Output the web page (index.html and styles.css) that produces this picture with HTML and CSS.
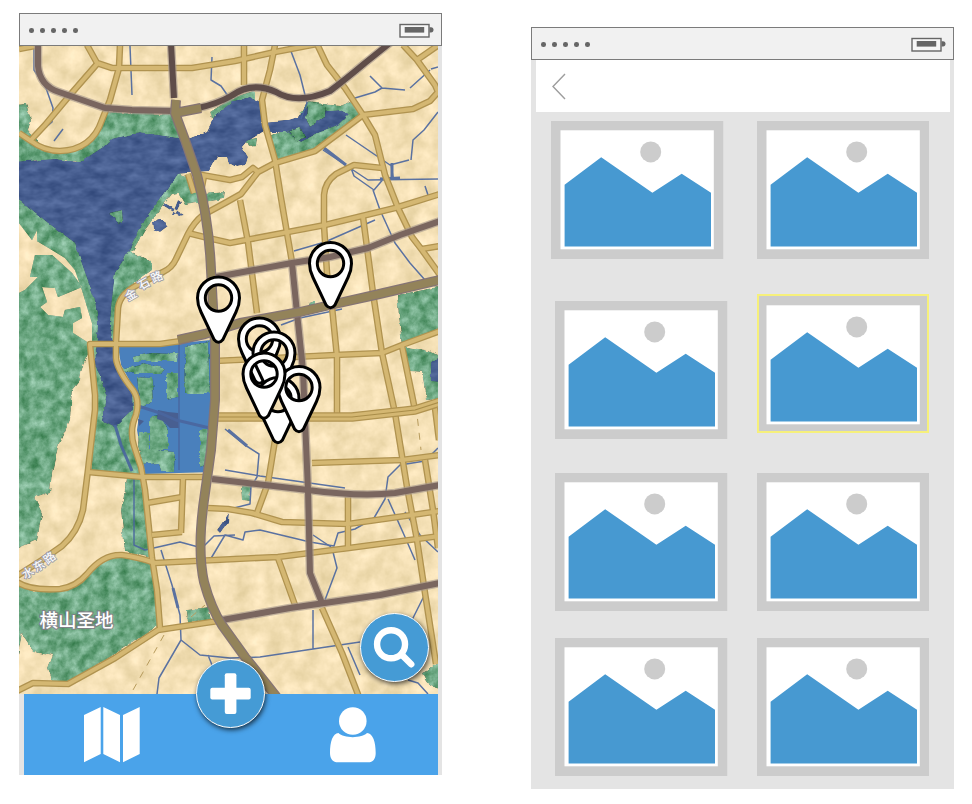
FILE: index.html
```html
<!DOCTYPE html>
<html lang="zh-CN">
<head>
<meta charset="utf-8">
<title>Map and gallery</title>
<link rel="stylesheet" href="styles.css">
</head>
<body>
<svg class="sprites" width="0" height="0" aria-hidden="true">
  <symbol id="picture" viewBox="0 0 172.5 138">
    <rect width="172.5" height="138" fill="#ccc"/>
    <rect x="9.5" y="9.3" width="153.3" height="119" fill="#fff"/>
    <circle cx="99.7" cy="30.9" r="10.5" fill="#ccc"/>
    <path d="M13.6 63.8 50.2 36.2 101.4 71.8 130.7 52.8 160 71.8V125.5H13.6Z" fill="#4799d1"/>
  </symbol>
  <symbol id="battery" viewBox="0 0 36 16">
    <rect x="1" y="1.5" width="29" height="12.5" fill="#f6f6f6" stroke="#666" stroke-width="1.4"/>
    <rect x="5.7" y="4" width="19.5" height="5.6" fill="#666"/>
    <path d="M30.5 4.2h1.5c3.4 0 3.4 5.2 0 5.2h-1.5z" fill="#666"/>
  </symbol>
</svg>
<main class="board">
  <section class="phone phone-map">
    <header class="status"><span class="dots"><i></i><i></i><i></i><i></i><i></i></span><svg class="battery"><use href="#battery"/></svg></header>
    <svg class="map" viewBox="19 45 419 649">
      <defs>
        <filter id="paper" x="0" y="0" width="1" height="1" color-interpolation-filters="sRGB">
          <feTurbulence type="fractalNoise" baseFrequency=".06" numOctaves="4" seed="4"/>
          <feColorMatrix values="1 0 0 0 0 1 0 0 0 0 1.3 0 0 0 -.15 0 0 0 0 1" result="n"/>
          <feComposite in="SourceGraphic" in2="n" operator="arithmetic" k2="1" k3=".17" k4="-.085"/>
          <feComposite in2="SourceGraphic" operator="in"/>
        </filter>
        <filter id="leaf" color-interpolation-filters="sRGB">
          <feTurbulence type="fractalNoise" baseFrequency=".1" numOctaves="4" seed="9" result="t"/>
          <feDisplacementMap in="SourceGraphic" in2="t" scale="5" xChannelSelector="R" yChannelSelector="G" result="s"/>
          <feColorMatrix in="t" values="1 0 0 0 0 .8 0 0 0 .1 1 0 0 0 0 0 0 0 0 1" result="n"/>
          <feComposite in="s" in2="n" operator="arithmetic" k2="1" k3=".55" k4="-.265"/>
          <feComposite in2="s" operator="in"/>
        </filter>
        <filter id="ripple" color-interpolation-filters="sRGB">
          <feTurbulence type="fractalNoise" baseFrequency=".06 .11" numOctaves="3" seed="2" result="t"/>
          <feDisplacementMap in="SourceGraphic" in2="t" scale="4" xChannelSelector="R" yChannelSelector="G" result="s"/>
          <feColorMatrix in="t" values="1 0 0 0 0 1 0 0 0 0 1 0 0 0 0 0 0 0 0 1" result="n"/>
          <feComposite in="s" in2="n" operator="arithmetic" k2="1" k3=".24" k4="-.12"/>
          <feComposite in2="s" operator="in"/>
        </filter>
        <g id="streets">
          <path d="M19 49 40 45M87 45 97 63 112 68H192L235 61 275 52 317 44"/>
          <path d="M120 45 119 68 110 100 102 120Q92 150 60 151 44 151 31 141L19 133M97 64 70 95 45 125 31 140"/>
          <path d="M244 45V85M275 45 270 70 262 100 265 125 275 160 281 198 292 262"/>
          <path d="M317 44 327 65 345 88 363 115 375 135 385 175 398 208 412 237 422 250 440 275"/>
          <path d="M363 115 413 109 430 101 438 92 435 85 417 60 403 45M417 60 440 44M422 249 440 246"/>
          <path d="M363 115 315 151 275 163 258 172 241 194 225 203 203 215Q194 222 188 234L176 259Q172 268 163 272L142 283Q120 292 118 308L116 343V358Q117 370 133 390 140 400 136 415 129 430 134 446L141 467 145 490 152 558 157 590 160 628"/>
          <path d="M188 174 194 193M193 175H202L230 180 242 177 253 168 258 172M204 176 201 192"/>
          <path d="M382 168 354 165 336 174Q325 182 324 195V225L327 273 332 307 337 357V418"/>
          <path d="M188 233 208 238 230 243 325 225 395 208 440 194M240 200 248 242 257 313"/>
          <path d="M363 217 373 293 382 353 395 413 407 487 417 540 425 593 436 664"/>
          <path d="M215 361 335 355 382 353 402 345 440 331M402 346 415 410M425 460 433 510 438 548M435 408 439 440"/>
          <path d="M312 463 402 460 440 455M208 508 228 509 252 513 282 522 348 524 412 515 440 511M348 497V547"/>
          <path d="M155 563 235 559 278 557 349 548 440 536M275 440 268 483 257 513M278 558 295 605M322 608 342 653 359 697"/>
          <path d="M181 341 160 344H90L95 395V410L88 470 83 510Q78 532 62 546L42 560 17 576"/>
          <path d="M88 472 142 477H207M183 479 181 533M147 503 182 497M152 535 182 532"/>
          <path d="M17 582Q30 591 60 589 76 587 87 574 103 554 122 555 138 557 155 563M17 691 33 683 68 684 115 658 158 630 218 621"/>
        </g>
        <path id="double" d="M215 417H352L415 410 440 402"/>
        <g id="avenues">
          <path d="M38 44V66Q40 86 59 92L105 108 132 110 173 111M216 277 292 263 330 257 368 248 400 235 440 221M292 263 297 313 303 370 305 420 308 490 310 573 322 603M212 479 308 490Q360 497 395 493L440 485M222 620 290 608 380 595 440 583"/>
        </g>
        <path id="ring" d="M171 44 174 98M198 108Q217 104 231 96 252 81 276 92 297 105 330 91 346 79 365 63L390 43"/>
        <g id="trunk">
          <path d="M176 100 175 113 201 108M175 113 185 140 197 175Q209 220 211 270L215 345V400L211 450 204 500Q197 550 204 582 211 608 222 625L245 657 283 705"/>
          <path d="M178 340 205 334 240 323 300 312 330 305 375 295 440 280"/>
        </g>
        <path id="pin" fill-rule="evenodd" d="M-21 0A21 21 0 0 1 21 0C21 5 20 9 17.500 14L4.500 41.500Q0 47-4.500 41.500L-17.500 14C-20 9-21 5-21 0ZM-13.200 0A13.200 13.200 0 1 0 13.200 0 13.200 13.200 0 1 0-13.200 0Z"/>
      </defs>
      <rect x="19" y="45" width="419" height="649" fill="#f4e0b5" filter="url(#paper)"/>

      <g class="wood" filter="url(#leaf)">
        <path d="M10 104 26 103 31 120 28 130 45 150 80 150 98 130 105 112 172 114 190 138 160 142 110 146 80 163 55 160 10 163Z"/>
        <path d="M210 112 232 98 256 90V103L230 106 212 120ZM268 137 290 128 308 102 340 106 355 100 363 115 315 152 277 160Z"/>
        <path d="M245 140 257 138 256 146 248 147ZM10 193 30 203 50 215 76 236 92 265 103 300 102 343 92 343 82 367 80 380 72 390 70 420 58 447 52 473 50 493 35 498 42 513 37 540 10 552Z"/>
        <path d="M178 173 190 177 200 190 204 194 225 192 224 199 185 205 178 193 172 194 145 230 132 252 152 262 152 270 125 290 118 303 115 343 105 343 108 260 150 200Z"/>
        <path d="M92 343H116L120 370 137 395 133 440 141 475 90 471 97 410ZM127 478H144L152 558 125 552 121 510Z"/>
        <path d="M10 583 35 590 65 590 82 580 102 560 125 554 154 562 159 625 110 657 68 684 52 680 48 668 53 655 34 651 22 633 18 655H10Z"/>
        <path d="M187 610 208 607 211 620 188 623ZM397 295 438 287H446V329L402 346 425 350 446 358V398L427 400 423 372 410 371 402 347ZM422 672 446 660V690Q428 690 422 672ZM242 486 251 486 250 502 243 501ZM310 302 316 300V305H309Z"/>
      </g>
      <g class="clear" filter="url(#paper)">
        <path d="M19 223 32 240 37 230V241L52 250 65 258 75 270 82 290 88 310 92 323V342H87L73 333V323L82 318 80 307 65 310 63 317 48 315 40 307 47 302 42 287 55 288 58 297 82 287 72 273 52 255H35L30 277 38 277 25 290 19 293Z"/>
      </g>

      <g class="water" filter="url(#ripple)">
        <path d="M10 162 55 159 80 162 103 147 112 139 140 132 178 138 188 139 207 131 215 115 233 101 250 97 261 102 262 123 285 121 298 117 308 104 320 112 340 110 349 114 338 125 317 133 300 142 285 131 263 131 247 141 242 147 248 157 245 165 236 167 229 163 227 156 217 156 209 171 178 174 167 190 145 220 130 250 115 273 112 300 110 323 113 345 118 370 132 390 133 410 115 427 102 420 107 397 95 363 98 323 95 300 83 267 75 243 48 223 10 192Z"/>
        <path d="M153 222 158 218 164 220 168 226 160 232 154 229ZM165 203 184 215 180 216 164 206ZM178 200 172 215 175 215 181 202ZM431 361 446 354V383L431 381ZM217 530 229 513 228 522 220 533Z"/>
      </g>
      <g class="wood" filter="url(#leaf)"><path d="M108 213 122 210 123 221 117 223 113 217ZM307 102 325 106 324 117 310 126 306 118ZM288 131 300 128 304 137 297 142Z"/></g>

      <path class="pond" d="M118 346 180 343 211 340 213 472 145 474 137 430 140 408 133 387 121 365Z"/>
      <g class="wood" filter="url(#leaf)">
        <path d="M133 357 150 353 179 354 178 361 135 361ZM121 369 143 363 165 368 160 374 133 374ZM185 347 208 341 210 393 184 393ZM167 372H178V397L167 400ZM137 377 152 378 153 403 140 409ZM150 416 160 415 168 430V450H150ZM139 433H149V449L175 452 174 472H162L160 463 143 465 138 446ZM200 430H208V464L200 467Z"/>
      </g>
      <path class="water" d="M158 410 168 412 178 413 179 428 170 428 163 421 157 419ZM138 419 144 421 139 426Z"/>
      <g class="stream">
        <path stroke-width="3" d="M115 425 121 445 132 471M135 405 160 413 176 420 214 429"/>
        <path d="M179 343V470M134 476V545L145 550 180 542 202 548 214 536 235 535M34 49V70L46 88 53 108 52 122 36 136M63 129 54 141M130 46 132 95M212 57 211 80 221 86 228 96"/>
        <path d="M289 46 300 75 307 103 301 119M355 98 375 92 382 88 370 76M382 88 405 90M410 88 430 70M438 67 431 69M438 112 424 130 413 140 411 160M323 150 350 168 368 180 438 179M346 135 368 150 390 165 409 160M391 164 393 177M351 168 354 176 374 190 385 177M425 186 429 198"/>
        <path d="M294 251 325 242 375 220M373 190 380 210 395 243 410 263 425 280M281 325 300 318 342 309M225 429 245 445 259 454 257 477 251 487 250 504 234 508M225 470 260 476 345 488M210 560 225 535 243 540 245 532 260 530 310 542 334 546 338 533 355 529 374 518 385 499 388 477 400 465 425 461 438 448M388 499 405 537 415 560M405 512 420 535 438 552"/>
        <path d="M161 550 172 585 180 615 181 640 159 678 157 694M181 640 200 655 230 658 260 657 313 649 360 642M313 649V610M333 552 337 568 325 600M348 647 360 675M208 655 214 670M425 594 412 620M408 680 418 683 428 694M313 535 331 547"/>
        <path stroke-width="3" d="M173 588 178 608M324 148 346 165M380 179 400 178M228 430 247 446M392 163V178"/>
      </g>
      <path class="trail" d="M164 635 133 690M416 405 421 450M191 617 205 605"/>

      <use href="#streets" class="edge"/><use href="#streets" class="fill"/>
      <use href="#double" class="edge wide"/><use href="#double" class="fill wide"/><use href="#double" class="rail"/>
      <use href="#avenues" class="halo"/><use href="#avenues" class="avenue"/>
      <use href="#ring" class="halo"/><use href="#ring" class="avenue dark"/>
      <use href="#trunk" class="trunk-edge"/><use href="#trunk" class="trunk"/>

      <g class="road-name">
        <text transform="translate(131 295) rotate(-30)" y="4">金</text>
        <text transform="translate(144 284) rotate(-30)" y="4">石</text>
        <text transform="translate(157 277) rotate(-24)" y="4">路</text>
        <text transform="translate(28 573) rotate(-30)" y="4">水</text>
        <text transform="translate(39 566) rotate(-30)" y="4">东</text>
        <text transform="translate(49.500 558) rotate(-38)" y="4">路</text>
      </g>
      <text class="place" x="39.500" y="627">横山圣地</text>

      <g class="pins">
        <use href="#pin" x="218.500" y="298"/>
        <use href="#pin" x="330.500" y="263.500"/>
        <use href="#pin" x="259.500" y="339"/>
        <use href="#pin" x="274" y="353"/>
        <use href="#pin" x="278" y="398.500"/>
        <use href="#pin" x="299" y="387.500"/>
        <use href="#pin" x="264" y="374"/>
      </g>
    </svg>
    <nav class="tabs">
      <svg class="tab-map" viewBox="0 0 56 56"><path d="M0 8 16.700 0V47L0 55.300ZM19.300 0 36 8V55.300L19.300 47ZM39 8 55.700 0V47L39 55.300Z"/></svg>
      <svg class="tab-user" viewBox="0 0 46 56"><circle cx="22.800" cy="14" r="13.800"/><path d="M8.500 26C13.500 31.500 32 31.500 37 26 43 26.500 45.700 35 45.700 46 45.700 52 43 55.300 38 55.300H8C3 55.300 0 52 0 46 0 35 2.500 26.500 8.500 26Z"/></svg>
    </nav>
    <button class="fab fab-search" aria-label="Search"><svg viewBox="-34 -34 68 68"><circle class="lens" cx="-3.500" cy="-3.300" r="14.200"/><path class="handle" d="M8 8 17 17"/></svg></button>
    <button class="fab fab-add" aria-label="Add"><svg viewBox="-34 -34 68 68"><rect x="-20.500" y="-5.800" width="41" height="11.800" rx="2"/><rect x="-5.800" y="-20.500" width="11.800" height="41.300" rx="2"/></svg></button>
  </section>

  <section class="phone phone-gallery">
    <header class="status"><span class="dots"><i></i><i></i><i></i><i></i><i></i></span><svg class="battery"><use href="#battery"/></svg></header>
    <div class="topbar"><svg class="back" viewBox="0 0 14 27"><path d="M13 1 1 13.500 13 26"/></svg></div>
    <div class="gallery">
      <svg class="card first"><use href="#picture"/></svg>
      <svg class="card"><use href="#picture"/></svg>
      <svg class="card"><use href="#picture"/></svg>
      <div class="selected"><svg class="card"><use href="#picture"/></svg></div>
      <svg class="card"><use href="#picture"/></svg>
      <svg class="card"><use href="#picture"/></svg>
      <svg class="card"><use href="#picture"/></svg>
      <svg class="card"><use href="#picture"/></svg>
    </div>
  </section>
</main>
</body>
</html>
```
FILE: styles.css
```css
* { box-sizing: border-box; }
body { margin: 0; background: #fff; font-family: "Noto Sans CJK SC", sans-serif; }
svg { display: block; }
.sprites { position: absolute; }
.board { display: flex; align-items: flex-start; gap: 89.5px; padding: 13px 0 0 19px; height: 804px; overflow: hidden; }
.phone { position: relative; width: 422.5px; height: 762px; background: #e4e4e4; flex: none; }
.phone-gallery { margin-top: 14px; }
.status { display: flex; justify-content: space-between; height: 32.5px; padding: 0 6px 0 9px; border: 1.5px solid #7b7b7b; background: #f1f1f1; }
.dots { display: flex; gap: 6.500px; padding-top: 14px; }
.dots i { width: 4.600px; height: 4.600px; border-radius: 50%; background: #666; }
.battery { width: 36px; height: 16px; margin-top: 9px; }

.map { width: 419px; height: 649px; margin-top: -.5px; overflow: hidden; }
.phone-map .status { position: relative; z-index: 1; }
.wood { fill: #6ba681; }
.clear { fill: #f4dfb4; }
.water { fill: #485f91; }
.pond { fill: #4a80bc; }
.stream { fill: none; stroke: #4a669f; stroke-width: 1.5; stroke-linejoin: round; opacity: .9; }
.trail { fill: none; stroke: #b79b5c; stroke-width: 1; stroke-dasharray: 7 7; }
.edge, .fill, .halo, .avenue, .trunk, .trunk-edge, .rail { fill: none; stroke-linejoin: round; }
.edge { stroke: #b09350; stroke-width: 6.600; }
.fill { stroke: #d4b772; stroke-width: 4; }
.edge.wide { stroke-width: 9.500; }
.fill.wide { stroke-width: 7; }
.rail { stroke: #a98d49; stroke-width: 1.200; }
.halo { stroke: #a4968c; stroke-width: 8.500; stroke-opacity: .65; }
.avenue { stroke: #7a665f; stroke-width: 6; }
.avenue.dark { stroke: #5f4d49; }
.trunk-edge { stroke: #857475; stroke-width: 10; }
.trunk { stroke: #93835a; stroke-width: 7.500; }
.road-name { font-size: 11.500px; font-weight: 500; text-anchor: middle; fill: #fafafa; stroke: #9c9ca8; stroke-width: 1.600; paint-order: stroke; }
.place { font-size: 18.500px; font-weight: 500; fill: #fff; stroke: #86798a; stroke-width: 2.200; paint-order: stroke; stroke-opacity: .8; }
.pins { fill: #fff; stroke: #000; stroke-width: 3; }

.tabs { display: flex; justify-content: space-between; width: 414px; height: 80.500px; margin-left: 4.500px; padding: 13px 62px 0 60.500px; background: #4aa3ea; fill: #fff; }
.tab-map { width: 56px; height: 56px; }
.tab-user { width: 46px; height: 56px; }
.fab { position: absolute; width: 69px; height: 69px; padding: 0; border: 1.500px solid #fff; border-radius: 50%; background: #459bd5; box-shadow: 1px 2px 5px rgba(0, 0, 0, .7); }
.fab svg { width: 100%; height: 100%; fill: #fff; overflow: visible; }
.fab-search { left: 341px; top: 600px; }
.fab-add { left: 177px; top: 645.500px; }
.fab .lens { fill: none; stroke: #fff; stroke-width: 6.500; }
.fab .handle { stroke: #fff; stroke-width: 6.500; stroke-linecap: round; }

.topbar { height: 52.500px; margin: 0 4px 0 4.500px; padding: 13px 0 0 16px; background: #fff; }
.back { width: 14px; height: 27px; fill: none; stroke: #9d9d9d; stroke-width: 1.400; }
.gallery { display: grid; grid-template-columns: 172.500px 172.500px; grid-template-rows: 180.400px 171.200px 165.400px 138px; column-gap: 29px; padding: 9px 0 0 24px; align-items: start; }
.card { width: 172.500px; height: 138px; }
.card.first { margin-left: -4px; }
.selected { position: relative; height: 139.500px; margin-top: -7.500px; padding-top: 2px; overflow: hidden; }
.selected::after { content: ""; position: absolute; inset: 0; border: 2px solid #f6f07b; }
```
